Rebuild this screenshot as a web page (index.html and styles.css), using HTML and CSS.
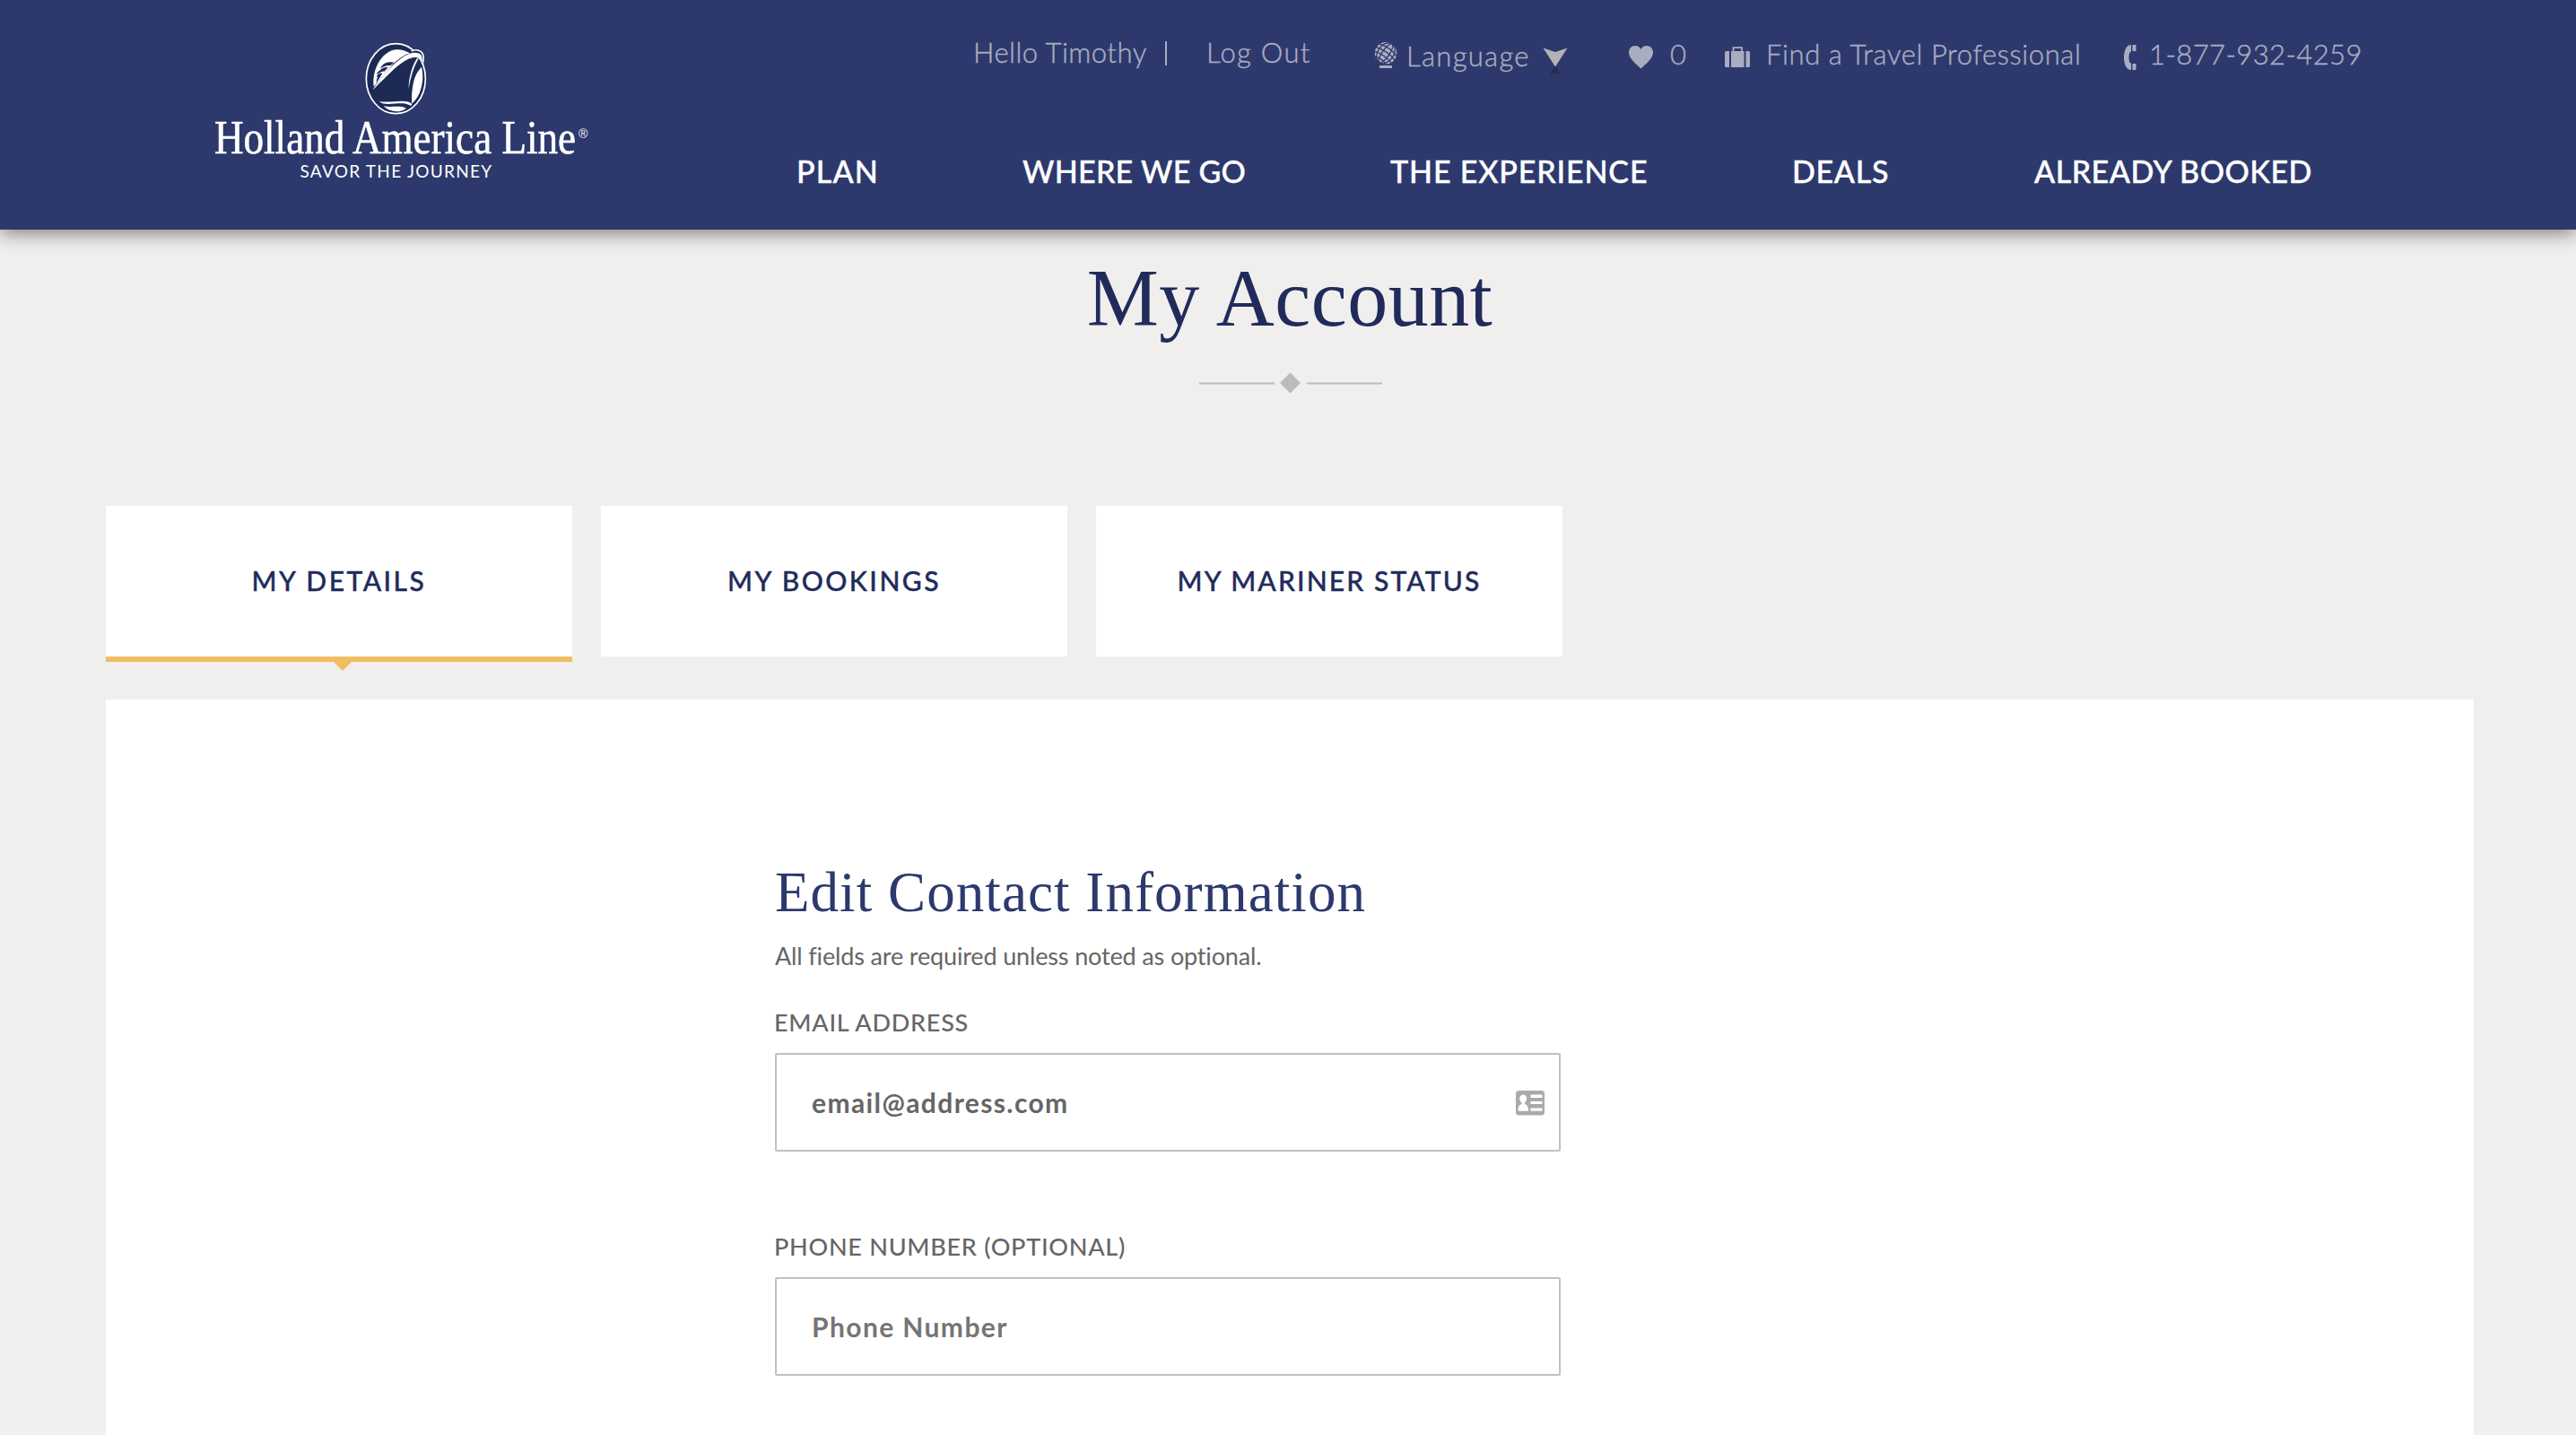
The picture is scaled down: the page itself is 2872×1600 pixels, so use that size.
FILE: index.html
```html
<!DOCTYPE html>
<html lang="en">
<head>
<meta charset="utf-8">
<title>My Account | Holland America Line</title>
<link rel="stylesheet" href="styles.css">
</head>
<body>
<header class="site-header">
  <a class="brand" aria-label="Holland America Line">
    <svg width="430" height="160" viewBox="230 44 430 160">
      <g transform="translate(400 44) scale(.33333)">
        <ellipse cx="124" cy="131" rx="99" ry="117" fill="#1c2a55" stroke="#fff" stroke-width="5"/>
        <path d="M50 157C43 92 84 36 126 34C147 34 160 40 173 47C150 56 128 70 114 83L53 155Z" fill="#fff"/>
        <path d="M172 46C160 48 132 64 112 86L150 100L211 92C221 66 219 35 192 34C184 34 178 36 174 38" fill="#1c2a55"/>
        <path d="M176 39C190 32 207 35 214 48C219 59 215 76 213 84" fill="none" stroke="#fff" stroke-width="5"/>
        <path d="M49 164C88 110 128 65 168 48C187 41 204 44 210 54C213 62 212 78 211 86C206 62 196 59 183 60C142 67 94 124 49 167Z" fill="#fff"/>
        <path d="M72 98C78 80 96 72 118 77L106 87C92 86 82 90 72 98ZM72 103C80 93 90 91 98 94L85 107C80 106 76 108 60 118C61 111 65 107 72 103ZM60 123C66 114 73 112 79 113L58 147C60 139 59 133 63 127Z" fill="#1c2a55"/>
        <path d="M49 168C94 126 142 70 183 62C190 61 194 62 196 64C183 85 174 126 178 207C150 201 112 209 70 205C58 195 52 182 49 168Z" fill="#1c2a55"/>
        <path d="M195 62C178 88 167 127 167 164C175 123 183 93 199 66Z" fill="#fff"/>
        <path d="M210 92C190 112 176 142 177 214C204 196 222 140 210 92Z" fill="#fff"/>
        <path d="M68 207C112 214 154 196 178 215L175 222C145 205 112 221 79 214Z" fill="#fff"/>
        <path d="M83 223C110 228 140 219 159 230C140 246 104 245 83 223Z" fill="#fff"/>
      </g>
      <text class="brand-name" x="239" y="171" textLength="403" lengthAdjust="spacingAndGlyphs">Holland America Line</text>
      <text class="brand-mark" x="645" y="154">®</text>
      <text class="brand-tag" x="334.500" y="198" textLength="213.500">SAVOR THE JOURNEY</text>
    </svg>
  </a>
  <div class="header-main">
    <div class="utility">
      <span class="hello">Hello Timothy</span>
      <span class="bar"></span>
      <a class="logout">Log Out</a>
      <a class="language">
        <svg class="globe" width="26" height="30" viewBox="0 0 26 30">
          <circle cx="13" cy="12.3" r="12.2" fill="#a9adc0"/>
          <g fill="none" stroke="#2d396d" stroke-width="1.3" transform="rotate(35 13 12.3)">
            <ellipse cx="13" cy="12.3" rx="4" ry="12.5"/><ellipse cx="13" cy="12.3" rx="9" ry="12.5"/>
            <path d="M1 8Q13 4 25 8M0 13Q13 9 26 13M1 18Q13 14 25 18M5 22.5Q13 19 21 22.5"/>
          </g>
          <path d="M6 26h14v3H6z" fill="#a9adc0"/>
        </svg>
        <span>Language</span>
        <svg class="caret" width="28" height="32" viewBox="0 0 28 32">
          <path d="M14 20L20 30.5L14 28L8 30.5Z" fill="#232d52"/>
          <path d="M.5 .5L14 5L27.500 .5L14 21.500Z" fill="#b3b3b3"/>
        </svg>
      </a>
      <a class="favorites">
        <svg width="27" height="26" viewBox="0 0 27 26"><path d="M13.500 25.500C9 21 0 14.500 0 7.500C0 3 3.200 0 7 0C10 0 12.300 1.500 13.500 4C14.700 1.500 17 0 20 0C23.800 0 27 3 27 7.500C27 14.500 18 21 13.500 25.500Z" fill="#a9adc0"/></svg>
        <span>0</span>
      </a>
      <a class="agent">
        <svg width="28" height="24" viewBox="0 0 28 24"><path d="M1.500 5H5v18H1.500Q0 23 0 21.500V6.500Q0 5 1.500 5ZM7 5H21.500V23H7ZM23.500 5H26.500Q28 5 28 6.500V21.500Q28 23 26.500 23H23.500Z" fill="#a9adc0"/><path d="M9.500 5V1.200H19V5" fill="none" stroke="#a9adc0" stroke-width="1.800"/></svg>
        <span>Find a Travel Professional</span>
      </a>
      <a class="phone">
        <svg width="14" height="28" viewBox="0 0 14 28"><path d="M8 0V7.500Q5.500 8 5.500 14T8 20.500V28C3 28 0 22 0 14S3 0 8 0ZM9.500 0H13.500V7H9.500ZM9.500 21H13.500V28H9.500Z" fill="#a9adc0"/></svg>
        <span>1-877-932-4259</span>
      </a>
    </div>
    <nav class="main-nav">
      <a class="plan">PLAN</a>
      <a class="where">WHERE WE GO</a>
      <a class="experience">THE EXPERIENCE</a>
      <a>DEALS</a>
      <a class="booked">ALREADY BOOKED</a>
    </nav>
  </div>
</header>

<main class="page">
  <h1>My Account</h1>
  <svg class="divider" width="204" height="24" viewBox="0 0 204 24">
    <path d="M0 12.500H84M120 12.500H204" stroke="#bbb" stroke-width="2"/>
    <path d="M101.500 .5L113 12L101.500 23.500L90 12Z" fill="#bbb"/>
  </svg>
  <div class="tabs">
    <a class="tab active">MY DETAILS</a>
    <a class="tab">MY BOOKINGS</a>
    <a class="tab mariner">MY MARINER STATUS</a>
  </div>
  <section class="panel">
    <form class="contact">
      <h2>Edit Contact Information</h2>
      <p class="hint">All fields are required unless noted as optional.</p>
      <label for="email">EMAIL ADDRESS</label>
      <div class="field">
        <input id="email" type="text" value="email@address.com">
        <svg class="card" width="32" height="28" viewBox="0 0 32 28">
          <rect width="32" height="27.500" rx="3.500" fill="#aaa"/>
          <path d="M16.500 4.500H29.500V8H16.500ZM16.500 12H29.500V15H16.500ZM16.500 19.500H29.500V22.800H16.500Z" fill="#fff"/>
          <ellipse cx="8.200" cy="9" rx="4" ry="4.600" fill="#fff"/>
          <path d="M6.500 11H10V15C13 16 14 18 14 22.800H2.500C2.500 18 3.500 16 6.500 15Z" fill="#fff"/>
        </svg>
      </div>
      <label for="phone">PHONE NUMBER (OPTIONAL)</label>
      <div class="field">
        <input id="phone" type="text" placeholder="Phone Number">
      </div>
    </form>
  </section>
</main>
</body>
</html>
```
FILE: styles.css
```css
* { box-sizing: border-box; }

body {
  margin: 0;
  height: 1600px;
  overflow: hidden;
  background: #f0efed;
  font-family: Lato, sans-serif;
}

/* Header */
.site-header {
  position: relative;
  display: flex;
  height: 256px;
  padding: 38px 0 0 230px;
  background: #2d396d;
  box-shadow: 0 4px 20px rgba(0, 0, 0, .48);
}
.brand {
  flex: none;
  width: 658px;
  padding-top: 6px;
}
.brand svg { display: block; }
.brand text { fill: #fff; }
.brand-name {
  font: 53px "Liberation Serif", serif;
  stroke: #fff;
  stroke-width: .6px;
}
.brand-mark { font: 14px "Liberation Sans", sans-serif; }
.brand-tag { font: 19px Lato, sans-serif; }

.utility {
  display: grid;
  grid-template-columns: 214px 46px 187px 284px 107px 445px auto;
  height: 44px;
  padding-left: 197px;
  color: #a9adc0;
  font-size: 31px;
  font-weight: 300;
  line-height: 40px;
  letter-spacing: .6px;
  white-space: nowrap;
  -webkit-text-stroke: .4px #a9adc0;
}
.utility a {
  display: flex;
  align-items: flex-start;
}
.utility svg { flex: none; }
.hello { letter-spacing: .5px; }
.bar {
  width: 2px;
  height: 27px;
  margin-top: 8px;
  background: #a9adc0;
}
.logout { letter-spacing: 1.3px; }
.language {
  gap: 9px;
  letter-spacing: 1.3px;
}
.language span { padding: 4px 0 0 1px; }
.globe { margin-top: 9px; }
.caret { margin: 15px 0 0 5px; }
.favorites, .agent, .phone { padding-top: 2px; }
.favorites { gap: 19px; }
.favorites svg { margin-top: 11px; }
.agent { gap: 18px; }
.agent svg { margin-top: 12px; }
.phone { gap: 14px; letter-spacing: .4px; }
.phone svg { margin-top: 10px; }

.main-nav {
  display: grid;
  grid-template-columns: 252px 410px 448px 270px auto;
  margin-top: 87px;
  color: #fff;
  font-size: 34px;
  font-weight: 500;
  line-height: 44px;
  letter-spacing: .7px;
  white-space: nowrap;
  -webkit-text-stroke: .4px #fff;
}
.plan { letter-spacing: 1.2px; }
.where { letter-spacing: .3px; }
.experience { letter-spacing: .85px; }
.booked { letter-spacing: .5px; }

/* Page */
.page {
  display: flex;
  flex-direction: column;
  width: 2640px;
  margin-left: 118px;
}
h1, h2 {
  margin: 0;
  font-family: "Liberation Serif", serif;
  font-weight: 400;
}
h1 {
  margin-top: 27px;
  color: #212b5b;
  font-size: 90px;
  line-height: 100px;
  letter-spacing: .5px;
  text-align: center;
}
.divider {
  margin: 32px 0 125px 1219px;
}

.tabs {
  display: flex;
  gap: 32px;
  height: 168px;
}
.tab {
  display: flex;
  align-items: center;
  justify-content: center;
  width: 520px;
  height: 168px;
  padding-bottom: 3px;
  background: #fff;
  color: #212b5b;
  font-size: 30px;
  font-weight: 500;
  letter-spacing: 2.5px;
  -webkit-text-stroke: .4px #212b5b;
}
.tab.mariner { letter-spacing: 2.15px; }
.tab.active {
  position: relative;
  box-shadow: 0 6px 0 #f2bd61;
}
.tab.active::after {
  content: "";
  position: absolute;
  top: 173px;
  left: 253px;
  border: solid transparent;
  border-width: 11px 11px 0;
  border-top-color: #f2bd61;
}

.panel {
  height: 820px;
  margin-top: 48px;
  padding: 177px 0 0 746px;
  background: #fff;
}
.contact { width: 876px; }
h2 {
  color: #2d396d;
  font-size: 63px;
  line-height: 76px;
  letter-spacing: 1.07px;
  white-space: nowrap;
}
.hint {
  margin: 15px 0 38px;
  color: #666;
  font-size: 27px;
  line-height: 36px;
  letter-spacing: -.15px;
}
label {
  display: block;
  margin: 0 0 16px -1px;
  color: #666;
  font-size: 27px;
  font-weight: 500;
  line-height: 36px;
  letter-spacing: .75px;
}
.field {
  position: relative;
  margin-bottom: 88px;
}
input {
  display: block;
  width: 100%;
  height: 110px;
  padding: 0 60px 1px 39px;
  border: 2px solid #c1c1c1;
  border-radius: 2px;
  background: #fff;
  color: #666;
  font: 700 30px Lato, sans-serif;
  letter-spacing: 1.4px;
}
input::placeholder { color: #757575; opacity: 1; }
.card {
  position: absolute;
  top: 42px;
  right: 18px;
}
```
